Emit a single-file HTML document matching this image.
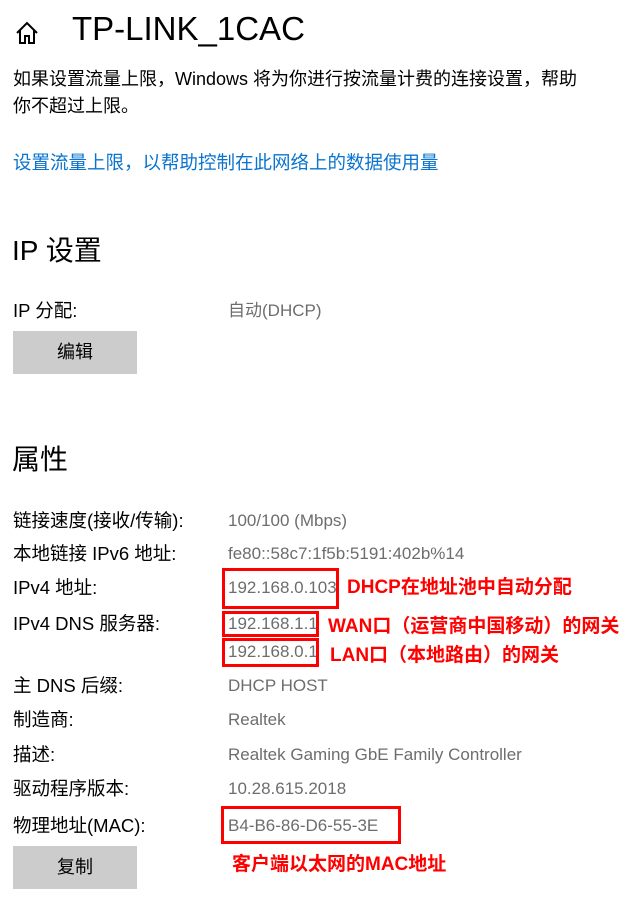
<!DOCTYPE html>
<html><head><meta charset="utf-8"><style>
body{margin:0;width:632px;height:909px;background:#fff;position:relative;overflow:hidden;font-family:"Liberation Sans","Noto Sans CJK SC",sans-serif;color:#000}
.a{position:absolute;white-space:nowrap;line-height:1}
.l{font-size:18.5px;left:13px}
.v{font-size:17px;left:228px;color:#6d6d6d}
.btn{position:absolute;left:13px;width:124px;height:43px;background:#ccc;font-size:18px;text-align:center;line-height:43px}
.box{position:absolute;border:3px solid #f00;box-sizing:border-box}
.r{color:#f00;font-weight:bold;font-size:19px}
</style></head><body>
<svg class="a" style="left:14px;top:20px" width="26" height="26" viewBox="0 0 26 26"><path d="M3 13 L13 3 L23 13 M6 10 V23 H11 V16 H15 V23 H20 V10" fill="none" stroke="#000" stroke-width="2"/></svg>
<div class="a" style="left:72px;top:12px;font-size:33px">TP-LINK_1CAC</div>
<div class="a" style="left:13px;top:66px;font-size:18px;line-height:27px;white-space:normal;width:582px">如果设置流量上限，Windows 将为你进行按流量计费的连接设置，帮助你不超过上限。</div>
<div class="a" style="left:13px;top:154px;font-size:18.5px;color:#0a74cf">设置流量上限，以帮助控制在此网络上的数据使用量</div>
<div class="a" style="left:12px;top:237px;font-size:28px">IP 设置</div>
<div class="a l" style="top:302px">IP 分配:</div><div class="a v" style="top:302px">自动(DHCP)</div>
<div class="btn" style="top:331px">编辑</div>
<div class="a" style="left:12px;top:446px;font-size:28px">属性</div>
<div class="a l" style="top:512px">链接速度(接收/传输):</div><div class="a v" style="top:512px">100/100 (Mbps)</div>
<div class="a l" style="top:545px">本地链接 IPv6 地址:</div><div class="a v" style="top:545px">fe80::58c7:1f5b:5191:402b%14</div>
<div class="a l" style="top:579px">IPv4 地址:</div><div class="a v" style="top:579px">192.168.0.103</div>
<div class="a l" style="top:615px">IPv4 DNS 服务器:</div><div class="a v" style="top:615px">192.168.1.1</div>
<div class="a v" style="top:643px">192.168.0.1</div>
<div class="a l" style="top:677px">主 DNS 后缀:</div><div class="a v" style="top:677px">DHCP HOST</div>
<div class="a l" style="top:711px">制造商:</div><div class="a v" style="top:711px">Realtek</div>
<div class="a l" style="top:746px">描述:</div><div class="a v" style="top:746px">Realtek Gaming GbE Family Controller</div>
<div class="a l" style="top:780px">驱动程序版本:</div><div class="a v" style="top:780px">10.28.615.2018</div>
<div class="a l" style="top:817px">物理地址(MAC):</div><div class="a v" style="top:817px">B4-B6-86-D6-55-3E</div>
<div class="btn" style="top:846px">复制</div>
<div class="box" style="left:222px;top:568px;width:117px;height:41px"></div>
<div class="box" style="left:222px;top:611px;width:97px;height:26px"></div>
<div class="box" style="left:222px;top:638px;width:97px;height:29px"></div>
<div class="box" style="left:221px;top:806px;width:180px;height:38px"></div>
<div class="a r" style="left:347px;top:578px">DHCP在地址池中自动分配</div>
<div class="a r" style="left:328px;top:617px">WAN口（运营商中国移动）的网关</div>
<div class="a r" style="left:330px;top:646px">LAN口（本地路由）的网关</div>
<div class="a r" style="left:232px;top:855px">客户端以太网的MAC地址</div>
</body></html>
